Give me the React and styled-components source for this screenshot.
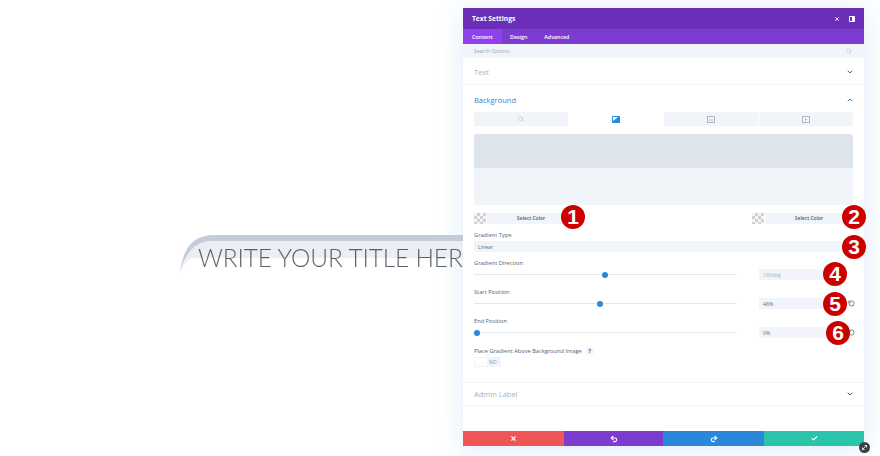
import React from "react";
import styled, { createGlobalStyle } from "styled-components";
import { X, Check, ChevronDown, ChevronUp, Search, RotateCcw, Undo2, Redo2, MoveDiagonal } from "lucide-react";

const GlobalStyle = createGlobalStyle`
  html, body { margin: 0; padding: 0; background: #fff; }
  body { font-family: "Open Sans", "Liberation Sans", sans-serif; }
`;

const Page = styled.div`
  position: relative;
  width: 880px;
  height: 456px;
  display: flex;
  overflow: hidden;
  background: #fff;
`;

const Canvas = styled.div`
  width: 463px;
  flex-shrink: 0;
  padding: 235px 0 0 180px;
  box-sizing: border-box;
  overflow: hidden;
`;

const Banner = styled.div`
  position: relative;
  width: 283px;
  height: 38px;
  padding: 10px 0 0 18px;
  box-sizing: border-box;
  overflow: hidden;
`;

const BannerArt = styled.svg`
  position: absolute;
  left: 0;
  top: 0;
`;

const BannerTitle = styled.div`
  position: relative;
  font-family: Lato, sans-serif;
  font-weight: 300;
  font-size: 24.5px;
  line-height: 26px;
  letter-spacing: -0.15px;
  white-space: nowrap;
  color: transparent;
  background-image: radial-gradient(circle at 50% 50%, #20272e 0 0.6px, transparent 0.85px);
  background-size: 1.9px 1.9px;
  -webkit-background-clip: text;
  background-clip: text;
`;

const Modal = styled.div`
  width: 401px;
  height: 438px;
  margin-top: 8px;
  display: flex;
  flex-direction: column;
  background: #fff;
  box-shadow: 0 4px 28px rgba(43, 135, 218, 0.16);
`;

const Header = styled.div`
  height: 21px;
  display: flex;
  align-items: center;
  padding: 0 9px;
  gap: 9px;
  background: #6c2eb9;
  color: #fff;
`;

const Title = styled.div`
  flex: 1;
  font-size: 6.7px;
  font-weight: 700;
`;

const TabBar = styled.div`
  height: 15px;
  display: flex;
  background: #7e3bd0;
`;

const Tab = styled.div`
  padding: 0 ${(p) => (p.$active ? "9px" : "8.5px")};
  display: flex;
  align-items: center;
  font-size: 5.3px;
  font-weight: 600;
  color: #fff;
  background: ${(p) => (p.$active ? "#8f42ec" : "transparent")};
`;

const SearchBar = styled.div`
  height: 14px;
  display: flex;
  align-items: center;
  justify-content: space-between;
  padding: 0 12px 0 11px;
  background: #f1f5f9;
  font-size: 5px;
  color: #9aa5b1;
`;

const SectionHead = styled.div`
  height: ${(p) => p.$height || 26}px;
  padding: 0 10px 0 11px;
  display: flex;
  align-items: center;
  justify-content: space-between;
  font-size: 7.5px;
  color: ${(p) => (p.$open ? "#2b87da" : "#a9b4c0")};
  border-bottom: ${(p) => (p.$open ? "none" : "1px solid #f3f6f9")};
  border-top: ${(p) => (p.$top ? "1px solid #f3f6f9" : "none")};
`;

const InsetHead = styled(SectionHead)`
  padding-top: 2px;
  box-sizing: border-box;
`;

const Content = styled.div`
  padding: 0 11px;
  display: flex;
  flex-direction: column;
`;

const BgTabs = styled.div`
  display: grid;
  grid-template-columns: repeat(4, 1fr);
  gap: 1px;
  height: 14px;
`;

const BgTab = styled.div`
  display: flex;
  align-items: center;
  justify-content: center;
  background: ${(p) => (p.$active ? "#fff" : "#f1f5f9")};
  color: ${(p) => (p.$active ? "#2b87da" : "#aeb8c3")};
  border-radius: 2px 2px 0 0;
`;

const Preview = styled.div`
  height: 71px;
  margin-top: 8px;
  border-radius: 2px;
  background: linear-gradient(180deg, #dee4eb 0 48%, #f1f5f9 48% 100%);
`;

const Pickers = styled.div`
  display: flex;
  justify-content: space-between;
  margin-top: 7.5px;
  height: 11px;
`;

const Picker = styled.div`
  width: 101px;
  display: flex;
  gap: 1px;
`;

const Swatch = styled.div`
  width: 12px;
  height: 11px;
  background-color: #fff;
  background-image: conic-gradient(#cfd2d5 25%, #f4f4f4 0 50%, #cfd2d5 0 75%, #f4f4f4 0);
  background-size: 6px 6px;
`;

const PickerButton = styled.div`
  flex: 1;
  display: flex;
  align-items: center;
  justify-content: center;
  background: #f1f5f9;
  font-size: 5px;
  font-weight: 600;
  color: #4c5866;
`;

const Field = styled.div`
  margin-top: ${(p) => p.$top || 8}px;
`;

const Label = styled.div`
  height: 8px;
  line-height: 8px;
  margin-bottom: 2px;
  display: flex;
  align-items: center;
  gap: 4px;
  font-size: 5.7px;
  font-weight: 400;
  color: #55626f;
`;

const SelectBox = styled.div`
  height: 11px;
  display: flex;
  align-items: center;
  padding-left: 4px;
  background: #f1f5f9;
  font-size: 5.2px;
  color: #5c6b7a;
`;

const SliderRow = styled.div`
  display: flex;
  align-items: center;
  height: 11px;
`;

const Track = styled.div`
  position: relative;
  flex-shrink: 0;
  width: 263px;
  height: 1.5px;
  background: #e2e9f1;
`;

const Thumb = styled.div`
  position: absolute;
  top: -2.25px;
  width: 6px;
  height: 6px;
  border-radius: 50%;
  background: #2b87da;
`;

const ValueBox = styled.div`
  flex-shrink: 0;
  width: 79px;
  height: 11px;
  margin-left: 22px;
  padding-left: 4px;
  box-sizing: border-box;
  display: flex;
  align-items: center;
  background: #f1f5f9;
  font-size: 5.2px;
  color: ${(p) => (p.$muted ? "#a9b4c0" : "#5c6b7a")};
`;

const Reset = styled.div`
  flex-shrink: 0;
  margin-left: 9.5px;
  display: flex;
  color: #4c5866;
`;

const Help = styled.span`
  width: 8px;
  height: 8px;
  border-radius: 50%;
  display: inline-flex;
  align-items: center;
  justify-content: center;
  background: #f1f5f9;
  font-size: 5px;
  font-weight: 700;
  color: #4c5866;
`;

const Toggle = styled.div`
  width: 27px;
  height: 10px;
  padding: 1px;
  box-sizing: border-box;
  display: flex;
  align-items: center;
  gap: 2px;
  background: #f1f5f9;
  font-size: 5px;
  color: #8a96a3;
`;

const Knob = styled.div`
  width: 12px;
  height: 8px;
  background: #fff;
`;

const Footer = styled.div`
  margin-top: auto;
  height: 15px;
  display: grid;
  grid-template-columns: 101px 99px 101px 100px;
`;

const FooterButton = styled.div`
  display: flex;
  align-items: center;
  justify-content: center;
  color: #fff;
  background: ${(p) => p.$bg};
`;

const Badge = styled.div`
  position: absolute;
  left: ${(p) => p.$x - 12}px;
  top: ${(p) => p.$y - 12}px;
  width: 24px;
  height: 24px;
  border-radius: 50%;
  display: flex;
  align-items: center;
  justify-content: center;
  background: #cc0000;
  color: #fff;
  font-family: "Liberation Sans", sans-serif;
  font-size: 21px;
  font-weight: 700;
`;

const ResizeHandle = styled.div`
  position: absolute;
  left: 858.5px;
  top: 441.5px;
  width: 11px;
  height: 11px;
  border-radius: 50%;
  display: flex;
  align-items: center;
  justify-content: center;
  background: #3a4045;
  color: #fff;
`;

const badges = [
  { n: 1, x: 573, y: 217 },
  { n: 2, x: 854, y: 217 },
  { n: 3, x: 854, y: 247 },
  { n: 4, x: 835, y: 274 },
  { n: 5, x: 835, y: 304 },
  { n: 6, x: 838, y: 333 },
];

const sliders = [
  { label: "Gradient Direction", left: 128, value: "180deg", muted: true, top: 7 },
  { label: "Start Position", left: 123, value: "48%", reset: true },
  { label: "End Position", left: 0, value: "0%", reset: true },
];

const GradientIcon = () => (
  <svg width="8" height="7" viewBox="0 0 8 7">
    <rect width="8" height="7" rx="1" fill="currentColor" />
    <path d="M1 1h5L1 5z" fill="#fff" />
  </svg>
);

const SplitIcon = () => (
  <svg width="6" height="6" viewBox="0 0 6 6">
    <rect width="6" height="6" rx="1" fill="#fff" />
    <rect x="1" y="1" width="2" height="4" fill="#6c2eb9" />
  </svg>
);

const App = () => {
  return (
    <Page>
      <GlobalStyle />
      <Canvas>
        <Banner>
          <BannerArt width="290" height="38" viewBox="0 0 290 38">
            <path d="M0 38C3 18 14 5 32 5H290V23H12C6 26 2 32 0 38Z" fill="#ebeff3" />
            <path d="M0 38C3 14 12 0 34 0H290V6H32C14 6 4 20 0 38Z" fill="#c2cdd9" />
          </BannerArt>
          <BannerTitle>WRITE YOUR TITLE HERE</BannerTitle>
        </Banner>
      </Canvas>
      <Modal>
        <Header>
          <Title>Text Settings</Title>
          <X size={6} strokeWidth={3.5} />
          <SplitIcon />
        </Header>
        <TabBar>
          <Tab $active>Content</Tab>
          <Tab>Design</Tab>
          <Tab>Advanced</Tab>
        </TabBar>
        <SearchBar>
          Search Options
          <Search size={6} color="#b6c0ca" />
        </SearchBar>
        <InsetHead $height={27}>
          Text
          <ChevronDown size={8} strokeWidth={3} color="#5c6b7a" />
        </InsetHead>
        <InsetHead $open $height={27}>
          Background
          <ChevronUp size={8} strokeWidth={3} color="#2b87da" />
        </InsetHead>
        <Content>
          <BgTabs>
            <BgTab><Search size={6} /></BgTab>
            <BgTab $active><GradientIcon /></BgTab>
            <BgTab><svg width="8" height="7" viewBox="0 0 8 7"><rect x=".5" y=".5" width="7" height="6" fill="none" stroke="currentColor" /><path d="M2 4h4" stroke="currentColor" /></svg></BgTab>
            <BgTab><svg width="8" height="7" viewBox="0 0 8 7"><rect x=".5" y=".5" width="7" height="6" fill="none" stroke="currentColor" /><path d="M3 2l2 1.5L3 5z" fill="currentColor" /></svg></BgTab>
          </BgTabs>
          <Preview />
          <Pickers>
            <Picker><Swatch /><PickerButton>Select Color</PickerButton></Picker>
            <Picker><Swatch /><PickerButton>Select Color</PickerButton></Picker>
          </Pickers>
          <Field $top={7.5}>
            <Label>Gradient Type</Label>
            <SelectBox>Linear</SelectBox>
          </Field>
          {sliders.map((s) => (
            <Field key={s.label} $top={s.top}>
              <Label>{s.label}</Label>
              <SliderRow>
                <Track><Thumb style={{ left: s.left }} /></Track>
                <ValueBox $muted={s.muted}>{s.value}</ValueBox>
                {s.reset && <Reset><RotateCcw size={7} strokeWidth={2.5} /></Reset>}
              </SliderRow>
            </Field>
          ))}
          <Field $top={9}>
            <Label>Place Gradient Above Background Image <Help>?</Help></Label>
            <Toggle><Knob />NO</Toggle>
          </Field>
        </Content>
        <Field $top={15}>
          <SectionHead $top $height={21.5}>
            Admin Label
            <ChevronDown size={8} strokeWidth={3} color="#5c6b7a" />
          </SectionHead>
        </Field>
        <Footer>
          <FooterButton $bg="#ef5555"><X size={7} strokeWidth={4} /></FooterButton>
          <FooterButton $bg="#7e3bd0"><Undo2 size={8} strokeWidth={3.5} /></FooterButton>
          <FooterButton $bg="#2b87da"><Redo2 size={8} strokeWidth={3.5} /></FooterButton>
          <FooterButton $bg="#29c4a9"><Check size={7} strokeWidth={4} /></FooterButton>
        </Footer>
      </Modal>
      {badges.map((b) => (
        <Badge key={b.n} $x={b.x} $y={b.y}>{b.n}</Badge>
      ))}
      <ResizeHandle><MoveDiagonal size={7} strokeWidth={2.5} /></ResizeHandle>
    </Page>
  );
};

export default App;
